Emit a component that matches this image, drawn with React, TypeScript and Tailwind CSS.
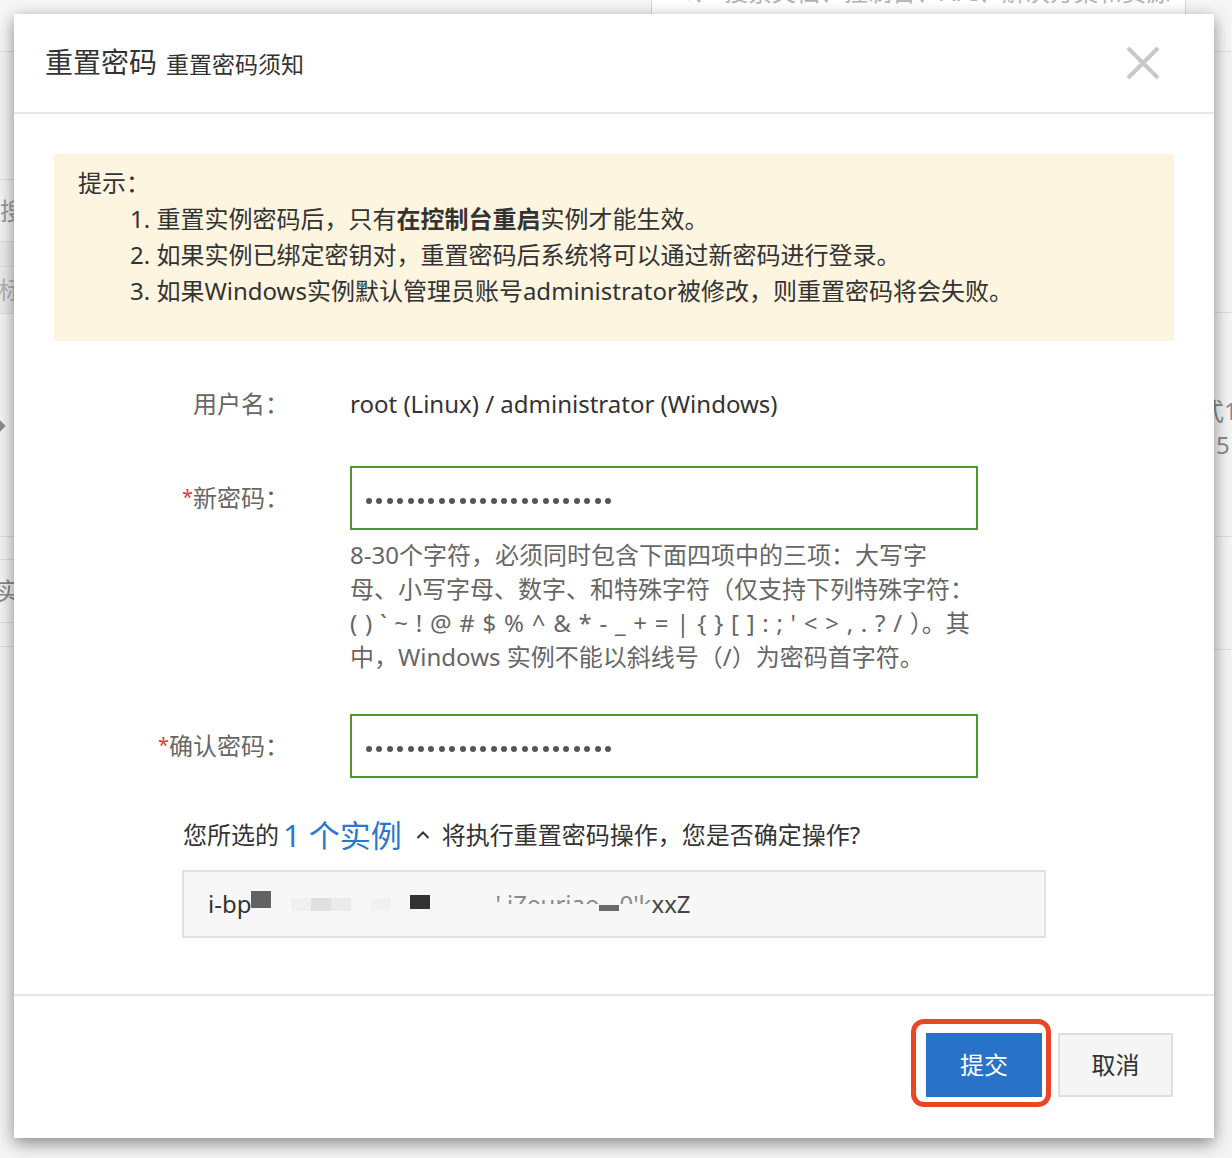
import React from "react";

function LeftFrag({ text, color, shift }: { text: string; color: string; shift: string }) {
  return (
    <div className="w-[14px] h-full overflow-hidden relative">
      <div className={`absolute top-1/2 -translate-y-1/2 whitespace-nowrap text-[24px] ${color} ${shift}`}>{text}</div>
    </div>
  );
}

function Backdrop() {
  return (
    <div className="flex flex-col w-full h-full">
      <div className="h-[52px] shrink-0 bg-[#f6f6f6] border-b border-[#dddddd] flex items-start">
        <div className="ml-[651px] w-[535px] h-[48px] -mt-[32px] border border-[#d6d6d6] bg-white flex items-center pl-[26px] gap-[22px] text-[#b3b3b3] text-[24px] whitespace-nowrap">
          <svg width="24" height="26" viewBox="0 0 24 26" fill="none" stroke="#b3b3b3" strokeWidth="2.4">
            <circle cx="11" cy="11" r="9" />
            <path d="M17.5 18 L22 23" />
          </svg>
          <span>搜索文档、控制台、API、解决方案和资源</span>
        </div>
      </div>
      <div className="flex-1 flex justify-between">
        <div className="w-[14px] flex flex-col">
          <div className="h-[128px] border-b border-[#dedede]" />
          <div className="h-[62px] border-b border-[#dedede]">
            <LeftFrag text="搜索" color="text-[#999]" shift="right-[-34px]" />
          </div>
          <div className="h-[25px] border-b border-[#dedede] bg-[#ececec]" />
          <div className="h-[47px] border-b border-[#dedede] bg-[#ececec]">
            <LeftFrag text="标签" color="text-[#b5b5b5]" shift="right-[-32px]" />
          </div>
          <div className="h-[223px] border-b border-[#dedede] relative">
            <div className="absolute left-[-4px] top-[108px] w-[8px] h-[8px] rotate-45 bg-[#8a8a8a]" />
          </div>
          <div className="h-[23px] border-b border-[#dedede]" />
          <div className="h-[63px] border-b border-[#dedede]">
            <LeftFrag text="实例" color="text-[#8a8a8a]" shift="right-[-30px]" />
          </div>
          <div className="h-[24px] border-b border-[#dedede]" />
        </div>
        <div className="w-[18px] flex flex-col">
          <div className="h-[261px] border-b border-[#dedede]" />
          <div className="h-[224px] border-b border-[#dedede] relative overflow-hidden">
            <div className="absolute left-[-14px] top-[80px] text-[24px] text-[#8a8a8a] whitespace-nowrap">式1</div>
            <div className="absolute left-[2px] top-[114px] text-[24px] text-[#8a8a8a]">5</div>
          </div>
          <div className="h-[113px] border-b border-[#dedede]" />
        </div>
      </div>
    </div>
  );
}

function Dots() {
  const dots = Array.from({ length: 24 });
  return (
    <>
      {dots.map((_, i) => (
        <span key={i} className="w-[6px] h-[6px] rounded-full bg-[#555555] mt-[5px] shrink-0" />
      ))}
    </>
  );
}

function Label({ text, required }: { text: string; required?: boolean }) {
  return (
    <div className="w-[235px] text-right text-[24px] text-[#666666] whitespace-nowrap">
      {required && <span className="text-[#e4393c] text-[20px] relative -top-[3px]">*</span>}
      {text}
    </div>
  );
}

function Dialog() {
  return (
    <div className="absolute left-[14px] top-[14px] w-[1200px] h-[1124px] bg-white shadow-[0_5px_16px_rgba(0,0,0,0.45)] flex flex-col">
      <div className="h-[100px] shrink-0 border-b-2 border-[#e6e6e6] flex items-center justify-between pl-[31px] pr-[54px]">
        <div className="flex items-baseline gap-[9px] text-[#333333] whitespace-nowrap -mt-[2px]">
          <span className="text-[28px]">重置密码</span>
          <span className="text-[23px]">重置密码须知</span>
        </div>
        <svg width="34" height="34" viewBox="0 0 34 34" stroke="#c8c8c8" strokeWidth="4" fill="none">
          <path d="M2 2 L32 32 M32 2 L2 32" />
        </svg>
      </div>

      <div className="flex-1 px-[40px] pt-[40px]">
        <div className="h-[187px] bg-[#fdf5df] pl-[24px] pt-[11px] text-[24px] leading-[36px] text-[#333333] whitespace-nowrap">
          <div>提示：</div>
          <div className="pl-[52px]">
            <div>
              1. 重置实例密码后，只有<span className="font-bold">在控制台重启</span>实例才能生效。
            </div>
            <div>2. 如果实例已绑定密钥对，重置密码后系统将可以通过新密码进行登录。</div>
            <div>3. 如果Windows实例默认管理员账号administrator被修改，则重置密码将会失败。</div>
          </div>
        </div>

        <div className="mt-[43px] h-[40px] flex items-center">
          <Label text="用户名：" />
          <div className="ml-[61px] text-[24px] text-[#333333] whitespace-nowrap">root (Linux) / administrator (Windows)</div>
        </div>

        <div className="mt-[42px] h-[64px] flex items-center">
          <Label text="新密码：" required />
          <div className="ml-[61px] w-[628px] h-[64px] border-2 border-[#4a9b2c] flex items-center pl-[14px] gap-[4.4px]">
            <Dots />
          </div>
        </div>

        <div className="ml-[296px] mt-[8px] text-[24px] leading-[34px] text-[#666666] whitespace-nowrap">
          <div>8-30个字符，必须同时包含下面四项中的三项：大写字</div>
          <div>母、小写字母、数字、和特殊字符（仅支持下列特殊字符：</div>
          <div className="[word-spacing:1.5px]">( ) ` ~ ! @ # $ % ^ &amp; * - _ + = | {"{"} {"}"} [ ] : ; ' &lt; &gt; , . ? / ）。其</div>
          <div>中，Windows 实例不能以斜线号（/）为密码首字符。</div>
        </div>

        <div className="mt-[40px] h-[64px] flex items-center">
          <Label text="确认密码：" required />
          <div className="ml-[61px] w-[628px] h-[64px] border-2 border-[#4a9b2c] flex items-center pl-[14px] gap-[4.4px]">
            <Dots />
          </div>
        </div>

        <div className="mt-[37px] ml-[129px] h-[40px] flex items-center text-[24px] text-[#333333] whitespace-nowrap">
          <span>您所选的</span>
          <span className="ml-[4px] text-[31px] text-[#2a78cc]">1 个实例</span>
          <svg className="ml-[14px]" width="14" height="10" viewBox="0 0 14 10" fill="none" stroke="#333333" strokeWidth="2">
            <path d="M1.5 8 L7 2.5 L12.5 8" />
          </svg>
          <span className="ml-[12px]">将执行重置密码操作，您是否确定操作?</span>
        </div>

        <div className="mt-[15px] ml-[128px] w-[864px] h-[68px] border-2 border-[#e0e0e0] bg-[#f7f7f7] flex items-center pl-[24px] text-[24px] text-[#333333] whitespace-nowrap">
          <span>i-bp</span>
          <span className="w-[20px] h-[17px] bg-[#626262] mb-[9px] shrink-0" />
          <span className="ml-[20px] w-[20px] h-[13px] bg-[#f0f0f0] shrink-0" />
          <span className="w-[20px] h-[13px] bg-[#e0e0e0] shrink-0" />
          <span className="w-[20px] h-[13px] bg-[#ebebeb] shrink-0" />
          <span className="ml-[20px] w-[20px] h-[13px] bg-[#f1f1f1] shrink-0" />
          <span className="ml-[19px] w-[20px] h-[14px] bg-[#333333] mb-[4px] shrink-0" />
          <span className="ml-[65px] h-[12px] overflow-hidden leading-[24px] mb-[12px] text-[#8a8a8a]">' iZeuriao</span>
          <span className="w-[20px] h-[6px] bg-[#6a6a6a] mt-[8px] shrink-0" />
          <span className="h-[12px] overflow-hidden leading-[24px] mb-[12px] text-[#8a8a8a]">0'k</span>
          <span className="text-[#444444]">xxZ</span>
        </div>
      </div>

      <div className="shrink-0 border-t-2 border-[#e6e6e6] pt-[37px] pb-[41px] pr-[41px] flex justify-end gap-[16px]">
        <div className="relative">
          <button className="w-[116px] h-[64px] bg-[#2872c7] text-white text-[24px]">提交</button>
          <div className="absolute -left-[15px] -top-[14px] -right-[9px] -bottom-[10px] border-[5px] border-[#eb4526] rounded-[13px] pointer-events-none" />
        </div>
        <button className="w-[115px] h-[64px] bg-[#f5f5f5] border-2 border-[#dedede] text-[#333333] text-[24px]">取消</button>
      </div>
    </div>
  );
}

export default function App() {
  return (
    <div className="relative w-[1232px] h-[1158px] overflow-hidden bg-[#f4f4f4] font-['Noto_Sans','Noto_Sans_CJK_SC',sans-serif]">
      <Backdrop />
      <Dialog />
    </div>
  );
}
